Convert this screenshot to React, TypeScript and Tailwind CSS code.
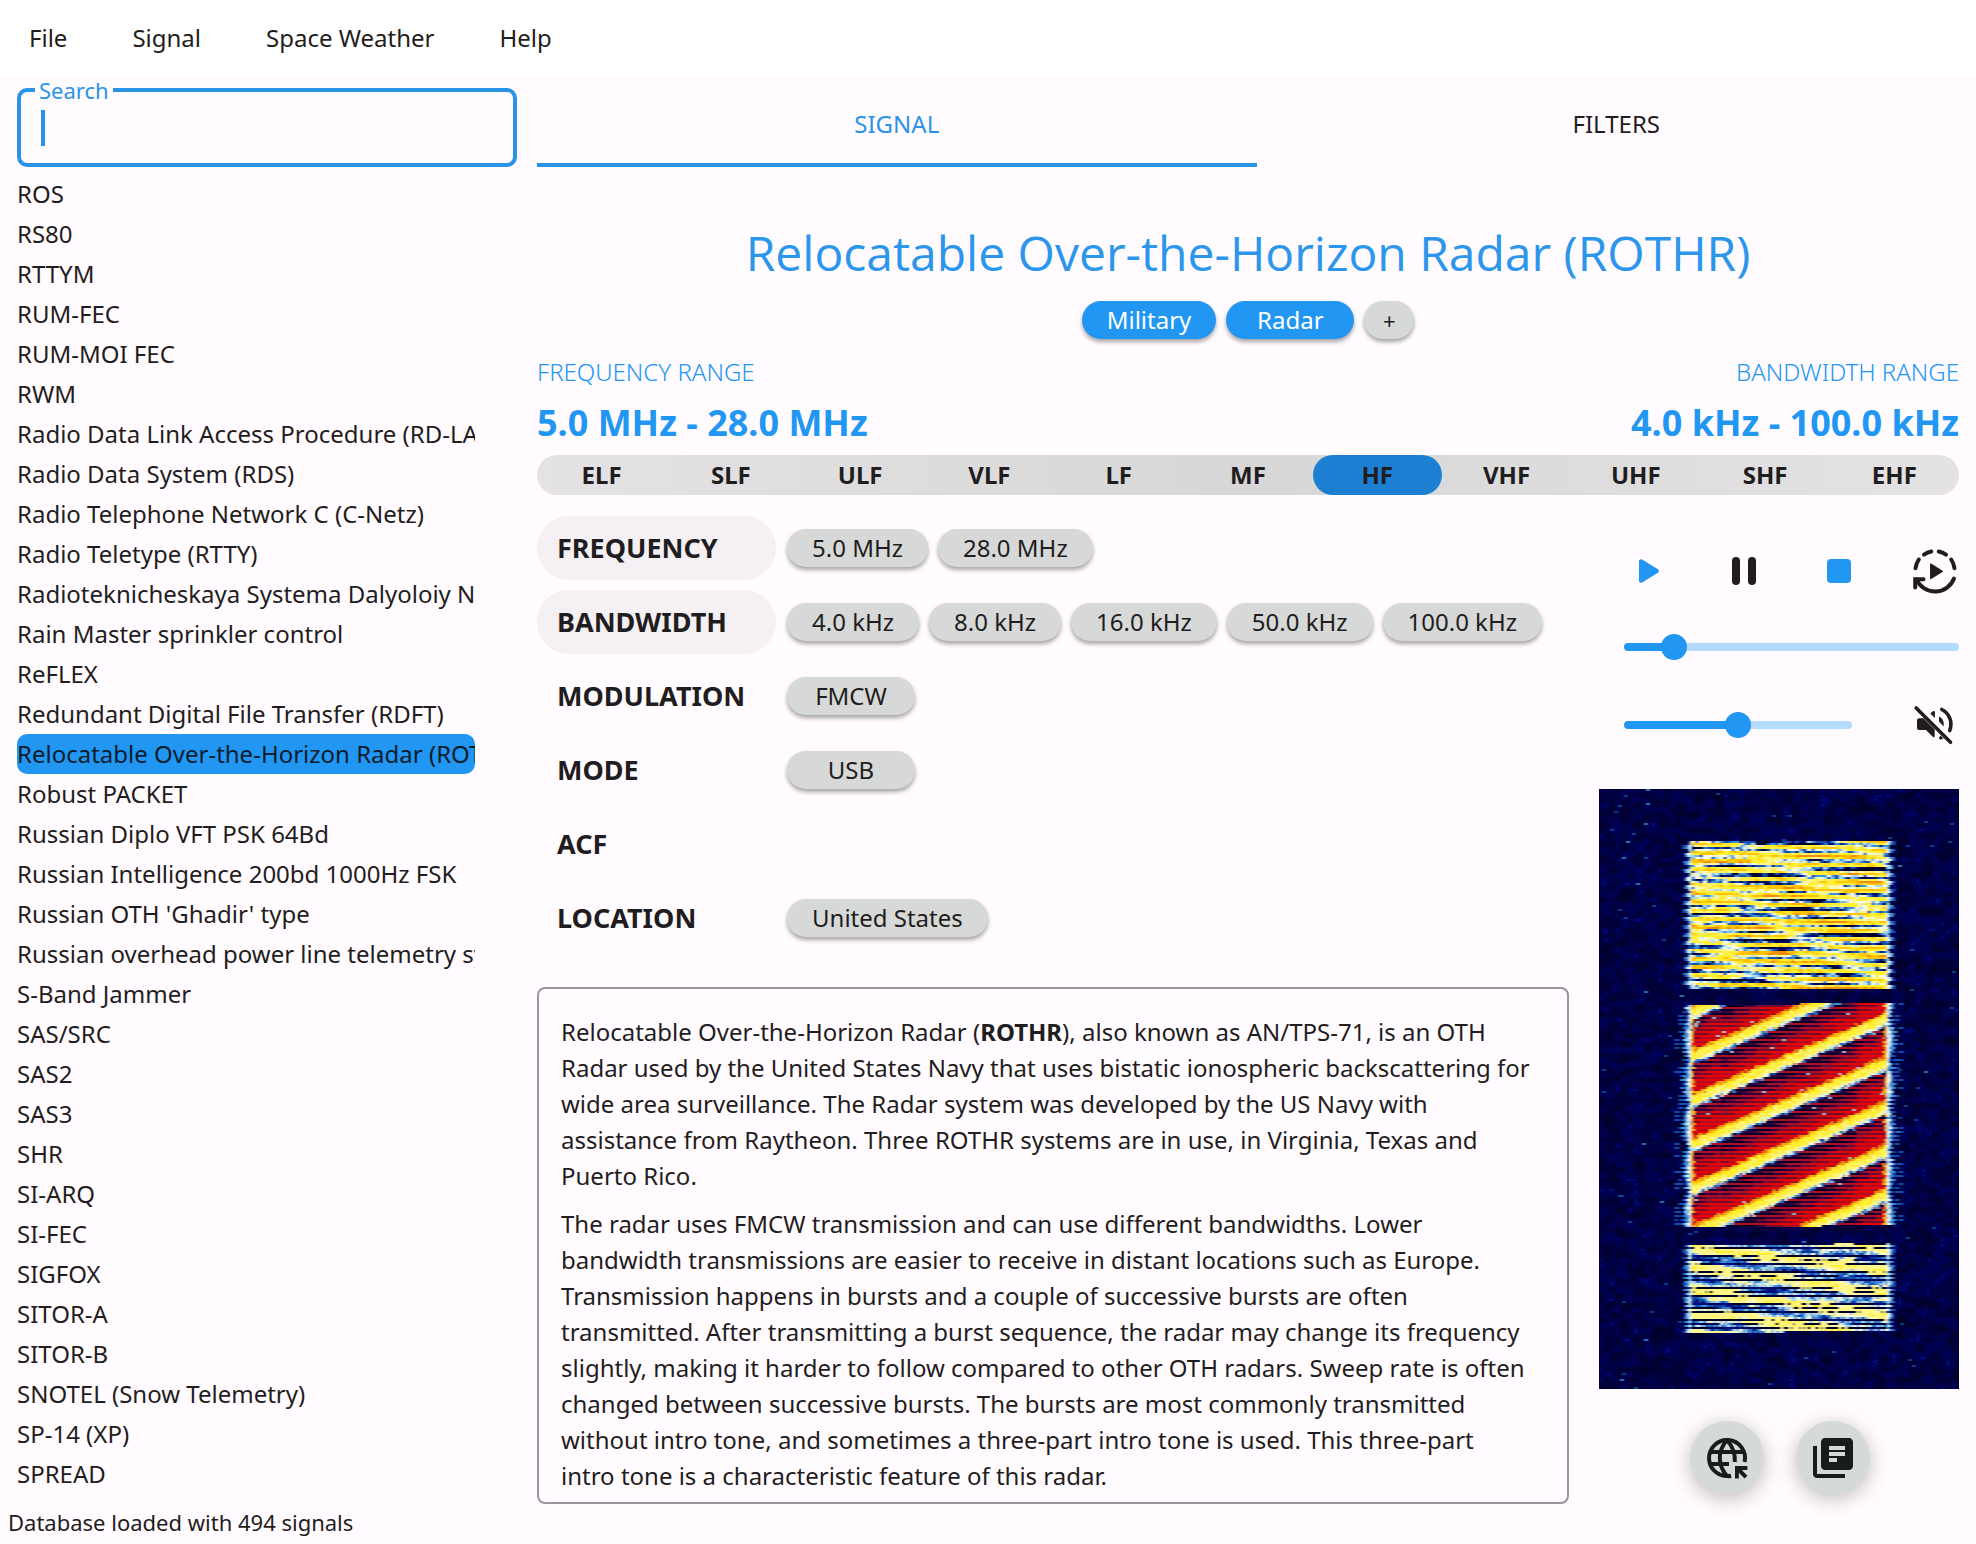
import { useMemo, useState } from "react";
import type { ReactNode } from "react";

const MENUS = ["File", "Signal", "Space Weather", "Help"];

const SIGNALS = [
  "ROS",
  "RS80",
  "RTTYM",
  "RUM-FEC",
  "RUM-MOI FEC",
  "RWM",
  "Radio Data Link Access Procedure (RD-LAP)",
  "Radio Data System (RDS)",
  "Radio Telephone Network C (C-Netz)",
  "Radio Teletype (RTTY)",
  "Radioteknicheskaya Systema Dalyoloiy Navigatsii",
  "Rain Master sprinkler control",
  "ReFLEX",
  "Redundant Digital File Transfer (RDFT)",
  "Relocatable Over-the-Horizon Radar (ROTHR)",
  "Robust PACKET",
  "Russian Diplo VFT PSK 64Bd",
  "Russian Intelligence 200bd 1000Hz FSK",
  "Russian OTH 'Ghadir' type",
  "Russian overhead power line telemetry system",
  "S-Band Jammer",
  "SAS/SRC",
  "SAS2",
  "SAS3",
  "SHR",
  "SI-ARQ",
  "SI-FEC",
  "SIGFOX",
  "SITOR-A",
  "SITOR-B",
  "SNOTEL (Snow Telemetry)",
  "SP-14 (XP)",
  "SPREAD",
];

const BANDS = ["ELF", "SLF", "ULF", "VLF", "LF", "MF", "HF", "VHF", "UHF", "SHF", "EHF"];

const PROPERTIES: { name: string; pill?: boolean; values: string[] }[] = [
  { name: "FREQUENCY", pill: true, values: ["5.0 MHz", "28.0 MHz"] },
  { name: "BANDWIDTH", pill: true, values: ["4.0 kHz", "8.0 kHz", "16.0 kHz", "50.0 kHz", "100.0 kHz"] },
  { name: "MODULATION", values: ["FMCW"] },
  { name: "MODE", values: ["USB"] },
  { name: "ACF", values: [] },
  { name: "LOCATION", values: ["United States"] },
];

/* ---------- waterfall ---------- */

const CELL = 2;
const COLS = 180;
const ROWS = 300;

const PALETTE = [
  "#00002c", "#00003e", "#000052", "#04107c", "#1450b4", "#3c90dc",
  "#a8d8f0", "#f4fbe8", "#fff68a", "#ffee30", "#ffc400", "#f08c10",
  "#30003c", "#6c0830", "#b00820", "#ec0404",
];

function noise(x: number, y: number, seed: number) {
  let h = Math.imul(x + 101, 374761393) ^ Math.imul(y + 57, 668265263) ^ Math.imul(seed + 7, 2246822519);
  h = Math.imul(h ^ (h >>> 13), 1274126177);
  return ((h ^ (h >>> 16)) >>> 0) / 4294967296;
}

function smooth(x: number, y: number, seed: number) {
  const xi = Math.floor(x);
  const yi = Math.floor(y);
  const fx = x - xi;
  const fy = y - yi;
  const a = noise(xi, yi, seed) * (1 - fx) + noise(xi + 1, yi, seed) * fx;
  const b = noise(xi, yi + 1, seed) * (1 - fx) + noise(xi + 1, yi + 1, seed) * fx;
  return a * (1 - fy) + b * fy;
}

function background(c: number, r: number) {
  const speck = noise(c, r, 1);
  if (speck > 0.9992) return 5;
  if (speck > 0.9975) return 4;
  const n = 0.75 * smooth(c / 3, r / 2.5, 2) + 0.25 * noise(c, r, 3);
  if (n > 0.86) return 3;
  if (n > 0.56) return 2;
  return n > 0.3 ? 1 : 0;
}

function edgeColor(d: number, c: number, r: number, reach: number) {
  const n = noise(c, r, 4);
  if (d > reach) return -1;
  const t = d / reach + (n - 0.5) * 0.5;
  if (t < 0.3) return 7;
  if (t < 0.5) return 6;
  if (t < 0.75) return 5;
  return t < 1 ? 4 : 3;
}

function cellColor(c: number, r: number) {
  const x = c * CELL;
  const y = r * CELL;
  const left = 92;
  const right = 286;
  const outside = x < left ? left - x : x > right ? x - right : 0;

  if (y >= 52 - (x > 190 ? 1 : 0) && y < 199) {
    const phase = (((y + x * 0.018) % 8) + 8) % 8;
    if (outside > 0) {
      const e = edgeColor(outside, c, r, phase < 4 ? 8 : 3);
      return e < 0 ? background(c, r) : e;
    }
    const fall = y - x * 0.03;
    const rise = y + x * 0.055;
    const v =
      0.52 +
      0.26 * Math.sin((fall / 8.2) * Math.PI * 2) +
      0.1 * Math.sin((rise / 34) * Math.PI * 2) +
      0.12 * Math.sin((rise / 9.5) * Math.PI * 2) +
      0.45 * (smooth(c / 9, r * 1.1, 6) - 0.5) +
      0.26 * (noise(Math.floor(c / 2), r, 5) - 0.5);
    if (v < 0.15) return 0;
    if (v < 0.21) return 3;
    if (v < 0.28) return 4;
    if (v < 0.34) return 5;
    if (v < 0.4) return 6;
    if (v < 0.47) return 7;
    if (v < 0.55) return 8;
    if (v < 0.76) return 9;
    return v < 0.98 ? 10 : 11;
  }

  if (y >= (x > 200 ? 214 : 216) && y < (x > 220 ? 436 : 438)) {
    const line = y % 4 < 2;
    const pos = (y + 0.42 * (x - 95) - 266 + 440) % 44;
    const d = Math.min(pos, 44 - pos);
    if (outside > 0) {
      const reach = 4 + 5 * Math.sin((pos / 44) * Math.PI);
      const e = edgeColor(outside, c, r, line ? reach - 1 : reach + 2);
      if (e >= 0) return e;
      if (!line && outside < 18 && noise(Math.floor(c / 2), r, 8) > 0.7) return 4;
      return background(c, r);
    }
    const side = Math.min(x - left, right - x);
    const jitter = (noise(c, r, 9) - 0.5) * 3.6;
    const dj = d + jitter;
    if (dj < 2.6) return noise(c, r, 10) > 0.25 ? 9 : 8;
    if (dj < 4.4) return pos < 22 ? 8 : 9;
    if (dj < 5.8) return pos < 22 ? (noise(c, r, 11) > 0.5 ? 7 : 6) : 10;
    if (dj < 7.2) return pos < 22 ? (noise(c, r, 12) > 0.5 ? 5 : 4) : 11;
    if (side < 1 + jitter) return noise(c, r, 13) > 0.5 ? 10 : 11;
    const heat = pos / 44 + 0.14 * (smooth(c / 8, r, 14) - 0.5) + (side < 30 ? 0.12 : 0);
    if (noise(c, r, 18) > 0.996) return 6;
    if (line) return heat > 0.7 ? 14 : heat > 0.5 ? 13 : heat > 0.38 ? 12 : 0;
    if (heat > 0.54) return 15;
    if (heat > 0.36) return 14;
    return r % 4 === 1 ? 14 : heat > 0.28 ? 13 : 12;
  }

  if (y >= (x > 235 ? 454 : 456) && y < (x > 185 ? 542 : 544)) {
    const gap = r % 4 === 1 || (r % 8 === 3 && x % 60 > 12);
    if (outside > 0) {
      const e = edgeColor(outside, c, r, gap ? 3 : 8);
      return e < 0 ? background(c, r) : e;
    }
    const patch = Math.sin(((y - 0.13 * x) / 22) * Math.PI * 2 + 0.4);
    const v = 0.56 + 0.22 * patch + 0.4 * (smooth(c / 7, r / 1.5, 15) - 0.5) + 0.24 * (noise(c, r, 16) - 0.5);
    if (gap) return v > 0.78 ? 8 : v < 0.36 ? 3 : 0;
    if (v < 0.22) return 3;
    if (v < 0.35) return 4;
    if (v < 0.43) return 5;
    if (v < 0.5) return 6;
    return v < 0.56 ? 7 : v < 0.82 ? 8 : 9;
  }

  if (x > 45 && x < 49 && noise(c, r, 17) > 0.94) return 5;
  return background(c, r);
}

function buildWaterfall() {
  const paths = PALETTE.map(() => "");
  for (let r = 0; r < ROWS; r++) {
    let start = 0;
    let current = cellColor(0, r);
    for (let c = 1; c <= COLS; c++) {
      const next = c < COLS ? cellColor(c, r) : -1;
      if (next !== current) {
        paths[current] += `M${start} ${r}h${c - start}v1h${start - c}z`;
        start = c;
        current = next;
      }
    }
  }
  return paths;
}

function Waterfall() {
  const paths = useMemo(buildWaterfall, []);
  return (
    <svg viewBox="0 0 180 300" role="img" aria-label="Signal waterfall" className="block w-full bg-[#000038]">
      <filter id="soften" x="0" y="0" width="1" height="1">
        <feGaussianBlur stdDeviation="0.45 0.25" />
      </filter>
      <g filter="url(#soften)" shapeRendering="crispEdges">
        {paths.map((d, i) => (
          <path key={PALETTE[i]} d={d} fill={PALETTE[i]} />
        ))}
      </g>
    </svg>
  );
}

/* ---------- icons ---------- */

function PlayIcon() {
  return (
    <svg viewBox="0 0 48 48" className="size-12" fill="#2196f3">
      <path d="M15 14.2v19.6a2 2 0 0 0 3.1 1.7l15.9-9.8a2 2 0 0 0 0-3.4L18.100 12.500A2 2 0 0 0 15 14.200z" />
    </svg>
  );
}

function PauseIcon() {
  return (
    <svg viewBox="0 0 48 48" className="size-12" fill="#1f1d20">
      <rect x="12" y="10" width="8" height="28" rx="4" />
      <rect x="28" y="10" width="8" height="28" rx="4" />
    </svg>
  );
}

function StopIcon() {
  return (
    <svg viewBox="0 0 48 48" className="size-12" fill="#2196f3">
      <rect x="12" y="12" width="24" height="24" rx="4" />
    </svg>
  );
}

function AutoplayIcon() {
  return (
    <svg
      viewBox="0 0 48 48"
      className="size-12"
      fill="none"
      stroke="#1f1d20"
      strokeWidth="4"
      strokeLinecap="round"
      strokeLinejoin="round"
    >
      <path d="M4.500 21.300A20 20 0 0 1 7.800 12.500" />
      <path d="M13 7.600A20 20 0 0 1 20.300 4.500" />
      <path d="M27.700 4.500A20 20 0 0 1 35 7.600" />
      <path d="M40.200 12.500A20 20 0 0 1 43.500 21.300" />
      <path d="M43 31.500A20.300 20.300 0 0 1 5.500 32.500" />
      <path d="M12.500 32.200H4.200V40.500" strokeLinejoin="miter" />
      <path d="M19.800 17.200v14.200L31.200 24.300z" fill="#1f1d20" strokeWidth="1.500" />
    </svg>
  );
}

function MutedIcon() {
  return (
    <svg viewBox="0 0 48 48" className="size-12" fill="#1f1d20">
      <path d="M8 17.300h4.500L23.700 28.500v6.800a1 1 0 0 1-1.700.7L15 29H8a2 2 0 0 1-2-2v-7.700a2 2 0 0 1 2-2z" />
      <path d="M19.300 12.500l2.600-2.300a1.200 1.200 0 0 1 2 .9v6z" />
      <path d="M28 15.500a8.500 8.500 0 0 1 4.700 7.500v2.500L28 20.500z" />
      <path d="M29.500 34.500l3 3.300-2.700.8a1.500 1.500 0 0 1-1.300-2.500z" />
      <g fill="none" stroke="#1f1d20" strokeWidth="3.600" strokeLinecap="round">
        <path d="M5.200 7L39.500 41.300" />
        <path d="M30.800 8.500A16.500 16.500 0 0 1 38.700 29.500" />
      </g>
    </svg>
  );
}

function GlobeArrowIcon() {
  return (
    <svg viewBox="0 0 24 24" className="size-12" fill="none" stroke="#1a1c1b" strokeWidth="2">
      <path d="M20.800 14A9 9 0 1 0 14 20.800" />
      <path d="M3.500 9h17M3.500 15H13" />
      <path d="M12 3C7.200 8.500 7.200 15.500 12 21q.8.300 1.900 0M12 3c3 3.400 4.200 7.200 3.900 11" />
      <path d="M16 16h6.200v2h-2.800l2.800 2.900-1.400 1.400-2.900-2.900v2.800H16z" fill="#1a1c1b" stroke="none" />
    </svg>
  );
}

function LibraryIcon() {
  return (
    <svg viewBox="0 0 24 24" className="size-12" fill="#1a1c1b">
      <path d="M4 6H2v14c0 1.100.9 2 2 2h14v-2H4z" />
      <path
        fillRule="evenodd"
        d="M20 2H8c-1.100 0-2 .9-2 2v12c0 1.100.9 2 2 2h12c1.100 0 2-.9 2-2V4c0-1.100-.9-2-2-2zM10 6h8v2h-8zM10 9h8v2h-8zM10 12h4v2h-4z"
      />
    </svg>
  );
}

/* ---------- controls ---------- */

function Chip({ children, active = false }: { children: ReactNode; active?: boolean }) {
  return (
    <button
      type="button"
      className={
        active
          ? "h-[38px] min-w-32 rounded-full bg-[#2196f3] px-[25px] text-[24px] leading-[38px] text-white shadow-[0_3px_4px_rgba(0,0,0,0.35)]"
          : "h-[38px] min-w-32 rounded-full bg-[#d6d9d7] px-[25px] text-[24px] leading-[38px] shadow-[0_3px_4px_rgba(0,0,0,0.35)]"
      }
    >
      {children}
    </button>
  );
}

function Slider({ label, initial }: { label: string; initial: number }) {
  const [value, setValue] = useState(initial);
  const stop = `calc(13px + (100% - 26px) * ${value / 100})`;
  return (
    <input
      type="range"
      aria-label={label}
      min={0}
      max={100}
      value={value}
      onChange={(e) => setValue(Number(e.target.value))}
      style={{ backgroundImage: `linear-gradient(to right, #2196f3 ${stop}, #b3dbfd ${stop})` }}
      className="h-2 w-full appearance-none rounded-full outline-none [&::-webkit-slider-thumb]:size-[26px] [&::-webkit-slider-thumb]:appearance-none [&::-webkit-slider-thumb]:rounded-full [&::-webkit-slider-thumb]:bg-[#2196f3]"
    />
  );
}

function Sidebar() {
  const [selected, setSelected] = useState("Relocatable Over-the-Horizon Radar (ROTHR)");
  const [query, setQuery] = useState("");
  return (
    <aside className="flex w-[537px] shrink-0 flex-col">
      <fieldset className="relative ml-[17px] h-[92px] w-[500px] rounded-[10px] border-4 border-[#2b93e6] px-[14px]">
        <legend className="px-1 text-[22px] leading-[30px] text-[#2b93e6]">
          <label htmlFor="search">Search</label>
        </legend>
        <input
          id="search"
          type="text"
          value={query}
          onChange={(e) => setQuery(e.target.value)}
          className="block h-11 w-full bg-transparent px-2 text-[24px] caret-transparent outline-none"
        />
        <span className="absolute top-[5px] left-5 h-9 w-1 bg-[#2b93e6]" />
      </fieldset>
      <ul className="mt-[7px] ml-[17px] w-[458px]">
        {SIGNALS.map((name) => (
          <li key={name}>
            <button
              type="button"
              onClick={() => setSelected(name)}
              className={
                name === selected
                  ? "block h-10 w-full overflow-hidden rounded-[10px] bg-[#2196f3] text-left text-[24px] leading-10 whitespace-nowrap text-[#0b1d2c]"
                  : "block h-10 w-full overflow-hidden rounded-[10px] text-left text-[24px] leading-10 whitespace-nowrap"
              }
            >
              {name}
            </button>
          </li>
        ))}
      </ul>
      <p className="mt-2 ml-2 text-[22px] leading-10">Database loaded with 494 signals</p>
    </aside>
  );
}

export default function App() {
  return (
    <div className="flex min-h-screen flex-col bg-[#fffbff] font-['Noto_Sans','Open_Sans',sans-serif] text-[#1f1d20]">
      <nav className="flex h-[75px] gap-[65px] bg-white pl-[29px]">
        {MENUS.map((m) => (
          <button key={m} type="button" className="text-[24px]">
            {m}
          </button>
        ))}
      </nav>

      <div className="flex flex-1">
        <Sidebar />

        <main className="min-w-0 flex-1">
          <div role="tablist" className="mt-[5px] grid h-[87px] grid-cols-2">
            <button
              role="tab"
              aria-selected="true"
              type="button"
              className="border-b-4 border-[#2b93e6] pt-1 text-[24px] text-[#2b93e6]"
            >
              SIGNAL
            </button>
            <button
              role="tab"
              aria-selected="false"
              type="button"
              className="border-b-4 border-transparent pt-1 text-[24px]"
            >
              FILTERS
            </button>
          </div>

          <div className="pr-[17px]">
            <h1 className="mt-[54px] text-center font-['Open_Sans','Noto_Sans',sans-serif] text-[48px] leading-[64px] text-[#2b96ec]">
              Relocatable Over-the-Horizon Radar (ROTHR)
            </h1>
            <div className="mt-4 flex justify-center gap-2.5">
              <Chip active>Military</Chip>
              <Chip active>Radar</Chip>
              <button
                type="button"
                aria-label="Add category"
                className="h-[38px] w-[50px] rounded-full bg-[#d6d9d7] text-[22px] shadow-[0_3px_4px_rgba(0,0,0,0.35)]"
              >
                +
              </button>
            </div>

            <div className="mt-[17px] flex justify-between text-[#2196f3]">
              <section>
                <h2 className="text-[24px] leading-8 font-light">FREQUENCY RANGE</h2>
                <p className="mt-[11px] text-[36px] leading-[48px] font-bold">5.0 MHz - 28.0 MHz</p>
              </section>
              <section className="text-right">
                <h2 className="text-[24px] leading-8 font-light">BANDWIDTH RANGE</h2>
                <p className="mt-[11px] text-[36px] leading-[48px] font-bold">4.0 kHz - 100.0 kHz</p>
              </section>
            </div>

            <ul className="mt-2 grid h-10 grid-cols-11 rounded-full bg-linear-to-r from-[#e4e2e4] via-[#d8d7d7] to-[#e4e2e4] text-center text-[24px] leading-10 font-bold">
              {BANDS.map((b) => (
                <li key={b} className={b === "HF" ? "rounded-full bg-[#1c7fd1]" : ""}>
                  {b}
                </li>
              ))}
            </ul>

            <div className="mt-[21px] flex gap-[30px]">
              <div className="min-w-0 flex-1">
                <dl className="flex flex-col gap-2.5">
                  {PROPERTIES.map((p) => (
                    <div key={p.name} className="flex h-16 items-center gap-[11px]">
                      <dt
                        className={
                          p.pill
                            ? "h-16 w-[239px] rounded-full bg-[#f4f0f3] pl-5 text-[27px] leading-16 font-bold"
                            : "h-16 w-[239px] rounded-full pl-5 text-[27px] leading-16 font-bold"
                        }
                      >
                        {p.name}
                      </dt>
                      <dd className="flex gap-2.5">
                        {p.values.map((v) => (
                          <Chip key={v}>{v}</Chip>
                        ))}
                      </dd>
                    </div>
                  ))}
                </dl>

                <article className="mt-[37px] rounded-lg border-2 border-[#9a959a] px-[22px] pt-[25px] pb-2 text-[24px] leading-9 whitespace-nowrap">
                  <p>
                    Relocatable Over-the-Horizon Radar (<strong>ROTHR</strong>), also known as AN/TPS-71, is an OTH
                    <br />
                    Radar used by the United States Navy that uses bistatic ionospheric backscattering for
                    <br />
                    wide area surveillance. The Radar system was developed by the US Navy with
                    <br />
                    assistance from Raytheon. Three ROTHR systems are in use, in Virginia, Texas and
                    <br />
                    Puerto Rico.
                  </p>
                  <p className="mt-3">
                    The radar uses FMCW transmission and can use different bandwidths. Lower
                    <br />
                    bandwidth transmissions are easier to receive in distant locations such as Europe.
                    <br />
                    Transmission happens in bursts and a couple of successive bursts are often
                    <br />
                    transmitted. After transmitting a burst sequence, the radar may change its frequency
                    <br />
                    slightly, making it harder to follow compared to other OTH radars. Sweep rate is often
                    <br />
                    changed between successive bursts. The bursts are most commonly transmitted
                    <br />
                    without intro tone, and sometimes a three-part intro tone is used. This three-part
                    <br />
                    intro tone is a characteristic feature of this radar.
                  </p>
                </article>
              </div>

              <aside className="flex w-[360px] shrink-0 flex-col">
                <div className="mt-[31px] flex justify-between pl-[25px]">
                  <button type="button" aria-label="Play">
                    <PlayIcon />
                  </button>
                  <button type="button" aria-label="Pause">
                    <PauseIcon />
                  </button>
                  <button type="button" aria-label="Stop">
                    <StopIcon />
                  </button>
                  <button type="button" aria-label="Autoplay">
                    <AutoplayIcon />
                  </button>
                </div>
                <div className="mt-8 flex h-10 items-center pl-[25px]">
                  <Slider label="Playback position" initial={12} />
                </div>
                <div className="mt-[34px] flex h-12 items-center gap-[59px] pl-[25px]">
                  <Slider label="Volume" initial={50} />
                  <button type="button" aria-label="Mute" className="shrink-0">
                    <MutedIcon />
                  </button>
                </div>
                <div className="mt-10">
                  <Waterfall />
                </div>
                <div className="mt-8 flex justify-center gap-8 pl-0.5">
                  <button
                    type="button"
                    aria-label="Open web page"
                    className="flex size-[74px] items-center justify-center rounded-full bg-[#d6dad7] shadow-[0_4px_20px_rgba(0,0,0,0.25)]"
                  >
                    <GlobeArrowIcon />
                  </button>
                  <button
                    type="button"
                    aria-label="Open documents"
                    className="flex size-[74px] items-center justify-center rounded-full bg-[#d6dad7] shadow-[0_4px_20px_rgba(0,0,0,0.25)]"
                  >
                    <LibraryIcon />
                  </button>
                </div>
              </aside>
            </div>
          </div>
        </main>
      </div>
    </div>
  );
}
